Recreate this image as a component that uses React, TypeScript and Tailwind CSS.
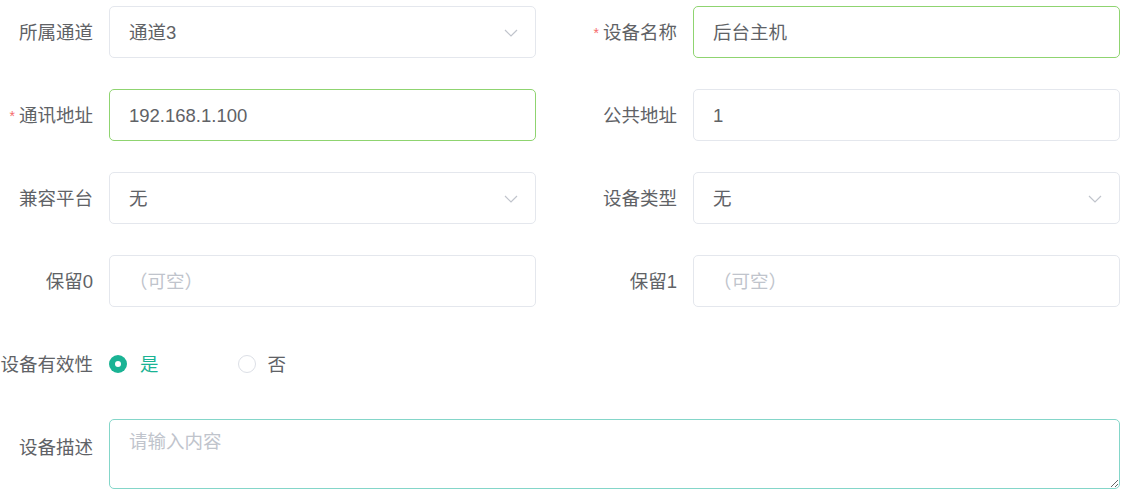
import React from "react";

const font = { fontFamily: '"Liberation Sans", "Noto Sans CJK SC", sans-serif' };

type FieldProps = {
  label: string;
  required?: boolean;
  children: React.ReactNode;
};

const Field = ({ label, required, children }: FieldProps) => (
  <div className="flex h-[52px] items-center">
    <label className="flex w-[109px] shrink-0 items-center justify-end whitespace-nowrap pr-4 pt-[2px] text-[18.5px] text-[#606266]">
      {required && <span className="mr-1 text-[14px] text-[#f56c6c]">*</span>}
      {label}
    </label>
    {children}
  </div>
);

const Box = ({
  value,
  placeholder,
  select,
  active,
}: {
  value?: string;
  placeholder?: string;
  select?: boolean;
  active?: boolean;
}) => (
  <div
    className={`flex h-[52px] flex-1 items-center rounded-[5px] border bg-white pt-[2px] pl-[19px] pr-[17px] text-[18.5px] ${
      active ? "border-[#8fd470]" : "border-[#e4e7ed]"
    }`}
  >
    <span className={`flex-1 ${value ? "text-[#606266]" : "text-[#c0c4cc]"}`}>
      {value || placeholder}
    </span>
    {select && (
      <svg width="14" height="8" viewBox="0 0 14 8" fill="none">
        <path d="M1 1l6 6 6-6" stroke="#c0c4cc" strokeWidth="1.2" />
      </svg>
    )}
  </div>
);

const App = () => {
  return (
    <div className="w-[1120px] bg-white pt-[6px]" style={font}>
      <div className="grid grid-cols-2 gap-x-[48px] gap-y-[31px]">
        <Field label="所属通道">
          <Box value="通道3" select />
        </Field>
        <Field label="设备名称" required>
          <Box value="后台主机" active />
        </Field>
        <Field label="通讯地址" required>
          <Box value="192.168.1.100" active />
        </Field>
        <Field label="公共地址">
          <Box value="1" />
        </Field>
        <Field label="兼容平台">
          <Box value="无" select />
        </Field>
        <Field label="设备类型">
          <Box value="无" select />
        </Field>
        <Field label="保留0">
          <Box placeholder="（可空）" />
        </Field>
        <Field label="保留1">
          <Box placeholder="（可空）" />
        </Field>
      </div>

      <div className="mt-[32px] flex h-[50px] items-center">
        <label className="flex w-[109px] shrink-0 justify-end whitespace-nowrap pr-4 pt-[2px] text-[18.5px] text-[#606266]">
          设备有效性
        </label>
        <div className="flex items-center">
          <span className="flex h-[18px] w-[18px] items-center justify-center rounded-full bg-[#1ab394]">
            <span className="h-[6px] w-[6px] rounded-full bg-white" />
          </span>
          <span className="ml-[13px] pt-[2px] text-[18.5px] text-[#1ab394]">是</span>
        </div>
        <div className="ml-[79px] flex items-center">
          <span className="h-[18px] w-[18px] rounded-full border border-[#dcdfe6] bg-white" />
          <span className="ml-[12px] pt-[2px] text-[18.5px] text-[#606266]">否</span>
        </div>
      </div>

      <div className="mt-[30px] flex">
        <label className="w-[109px] shrink-0 whitespace-nowrap pr-4 pt-[15px] text-right text-[18.5px] text-[#606266]">
          设备描述
        </label>
        <textarea
          className="h-[70px] flex-1 rounded-[5px] border border-[#84d6c9] px-[19px] py-[8px] text-[18.5px] text-[#606266] outline-none placeholder:text-[#c0c4cc]"
          placeholder="请输入内容"
          style={font}
        />
      </div>
    </div>
  );
};

export default App;
